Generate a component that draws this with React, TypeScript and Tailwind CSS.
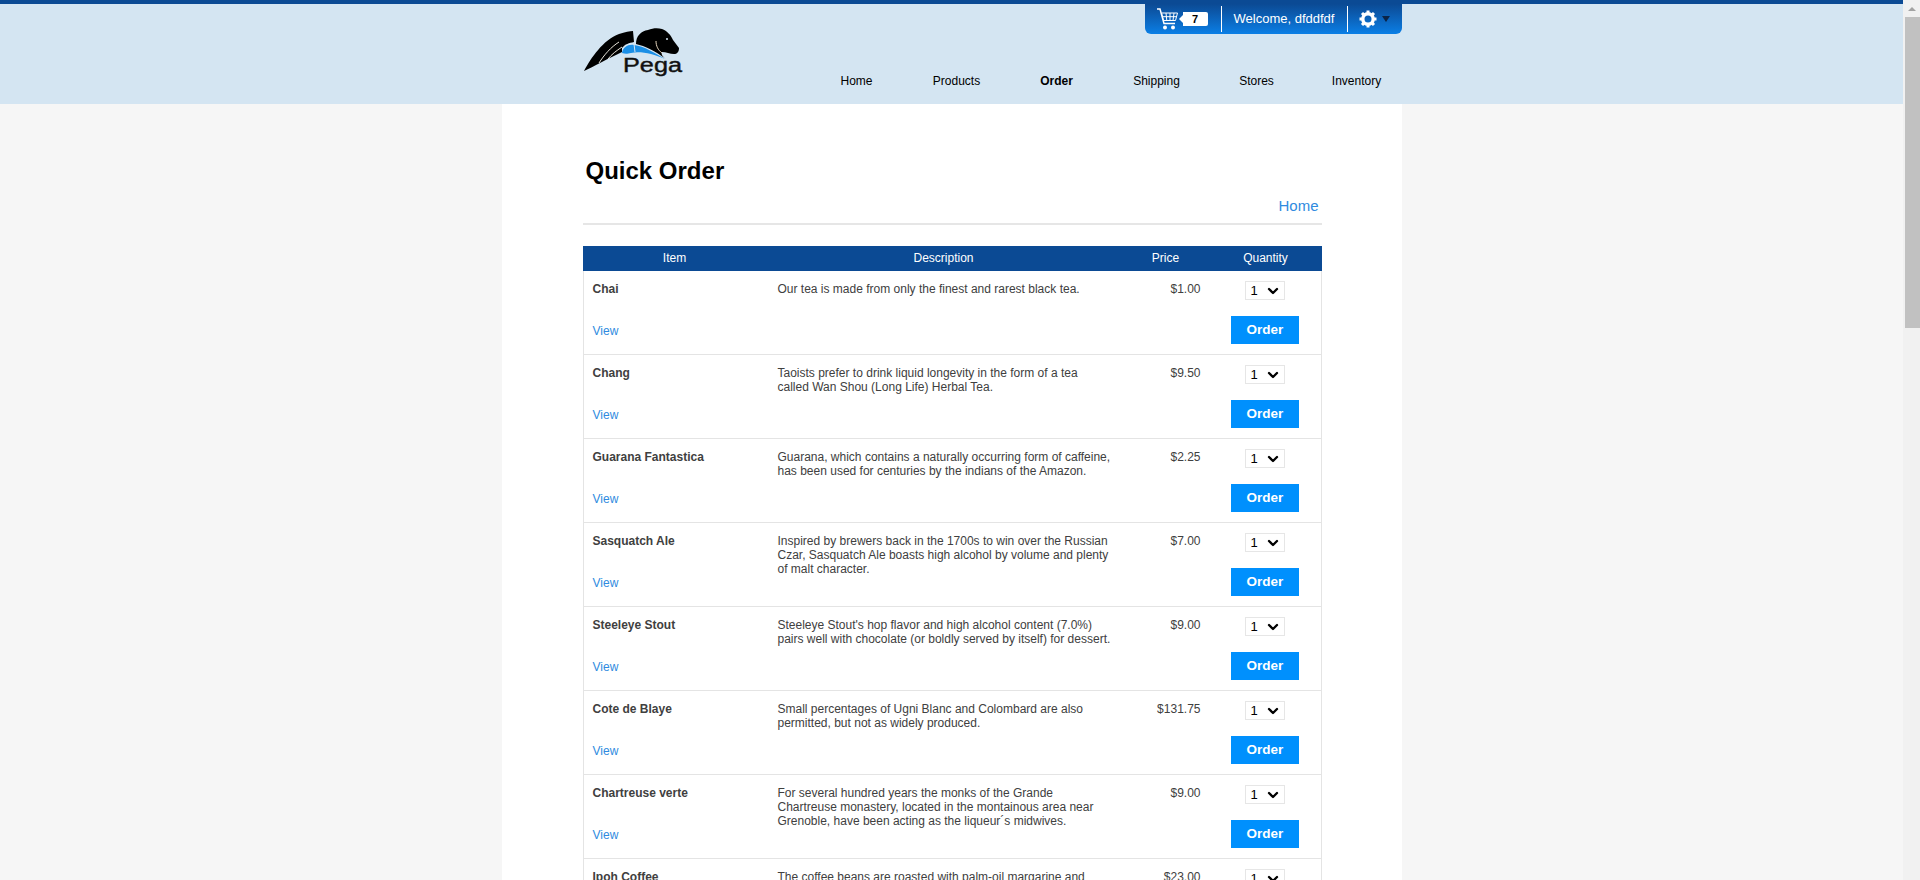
import { ChevronDown } from 'lucide-react';

type Product = {
  name: string;
  price: string;
  lines: string[];
};

const products: Product[] = [
  { name: 'Chai', price: '$1.00', lines: ['Our tea is made from only the finest and rarest black tea.'] },
  { name: 'Chang', price: '$9.50', lines: ['Taoists prefer to drink liquid longevity in the form of a tea', 'called Wan Shou (Long Life) Herbal Tea.'] },
  { name: 'Guarana Fantastica', price: '$2.25', lines: ['Guarana, which contains a naturally occurring form of caffeine,', 'has been used for centuries by the indians of the Amazon.'] },
  { name: 'Sasquatch Ale', price: '$7.00', lines: ['Inspired by brewers back in the 1700s to win over the Russian', 'Czar, Sasquatch Ale boasts high alcohol by volume and plenty', 'of malt character.'] },
  { name: 'Steeleye Stout', price: '$9.00', lines: ["Steeleye Stout's hop flavor and high alcohol content (7.0%)", 'pairs well with chocolate (or boldly served by itself) for dessert.'] },
  { name: 'Cote de Blaye', price: '$131.75', lines: ['Small percentages of Ugni Blanc and Colombard are also', 'permitted, but not as widely produced.'] },
  { name: 'Chartreuse verte', price: '$9.00', lines: ['For several hundred years the monks of the Grande', 'Chartreuse monastery, located in the montainous area near', 'Grenoble, have been acting as the liqueur´s midwives.'] },
  { name: 'Ipoh Coffee', price: '$23.00', lines: ['The coffee beans are roasted with palm-oil margarine and', 'sugar, which gives the coffee its distinctive flavor.'] },
];

const navItems = ['Home', 'Products', 'Order', 'Shipping', 'Stores', 'Inventory'];

function PegaLogo() {
  return (
    <svg width="104" height="52" viewBox="0 0 104 52" className="block">
      {/* wing */}
      <path d="M3 45 C10 32 22 14 38 8 C44 6 49 5 52 5 L53 16 C48 17 44 18 41 22 L41 26 C28 32 12 41 3 45 Z" fill="#000" />
      <path d="M18 37 C23 29 30 21 38 16 M27 33 C31 28 35 25 41 21" stroke="#e8e4da" strokeWidth="1" fill="none" />
      {/* horse head */}
      <path d="M55 18 C55 10 60 5 67 4 C72 2 77 2 81 3 C86 5 90 9 92 14 L98 22 C98 26 96 28 93 28 C89 28 85 26 81 26 C80 28 81 30 85 33 C74 25 64 20 55 18 Z" fill="#000" />
      <circle cx="86" cy="13" r="1" fill="#d4e5f2" />
      <path d="M75 15 C75 20 77 24 81 27" stroke="#e6d5bd" strokeWidth="1" fill="none" />
      {/* blue band */}
      <path d="M41 27 C42 21 47 18 53 19 C63 20 74 27 84 33 C72 28 60 25 50 27 C46 28 44 28 41 27 Z" fill="#1b8fe6" />
      <path d="M53 18 L54 26" stroke="#d4e5f2" strokeWidth="1" />
      <text x="42" y="46" fontFamily='"Liberation Sans", sans-serif' fontSize="20" textLength="59" lengthAdjust="spacingAndGlyphs" fill="#111" stroke="#111" strokeWidth="0.4">Pega</text>
    </svg>
  );
}

function CartIcon() {
  return (
    <svg width="21" height="22" viewBox="0 0 21 22" fill="none" stroke="#fff" strokeWidth="1.5">
      <path d="M0 1 H3 L7 15.5 H18" />
      <path d="M4.5 5 H20.5 L18.5 12.5 H6.5 Z M9 5 L9.8 12.5 M13 5 V12.5 M17 5 L16 12.5 M5.5 8.7 H19.5" strokeWidth="1" />
      <circle cx="8" cy="19.5" r="2" fill="#fff" stroke="none" />
      <circle cx="16" cy="19.5" r="2" fill="#fff" stroke="none" />
    </svg>
  );
}

function GearIcon() {
  return (
    <svg width="18" height="18" viewBox="0 0 18 18">
      <circle cx="9" cy="9" r="5.2" fill="none" stroke="#fff" strokeWidth="3.4" />
      <path d="M9 0.5 V17.5 M0.5 9 H17.5 M3 3 L15 15 M15 3 L3 15" stroke="#fff" strokeWidth="3" strokeDasharray="2.6 11.8" />
    </svg>
  );
}

function ProductRow({ product }: { product: Product }) {
  return (
    <div className="flex h-[84px] border-b border-[#e4e4e4] text-[12px] leading-[14px] text-[#404040]">
      <div className="flex w-[194px] flex-col justify-between pt-[11px] pb-[16px] pl-[9px]">
        <span className="font-bold">{product.name}</span>
        <a className="text-[#2f8be0]">View</a>
      </div>
      <div className="w-[340px] pt-[11px] whitespace-nowrap">
        {product.lines.map((line) => (
          <div key={line}>{line}</div>
        ))}
      </div>
      <div className="w-[83px] pt-[11px] text-right">{product.price}</div>
      <div className="flex flex-1 flex-col gap-[16px] pt-[10px] pl-[44px]">
        <div className="flex h-[19px] w-[40px] items-center justify-between border border-[#e6e6e6] pr-[3px] pl-[5px] text-[13px] text-black">
          <span>1</span>
          <ChevronDown size={16} strokeWidth={3.5} />
        </div>
        <button className="-ml-[14px] h-[28px] w-[68px] bg-[#0090fd] pl-[1px] text-[13.5px] font-bold text-white">Order</button>
      </div>
    </div>
  );
}

export default function App() {
  return (
    <div className="flex h-[880px] overflow-hidden bg-[#f6f6f6] font-['Liberation_Sans',Arial,sans-serif]">
      <div className="flex min-w-0 flex-1 flex-col">
        <header className="h-[104px] shrink-0 border-t-[4px] border-[#0b4a94] bg-[#d4e5f2]">
          <div className="relative mx-auto h-full w-[900px]">
            <div className="ml-auto flex h-[30px] w-[257px] items-center rounded-b-[6px] bg-gradient-to-b from-[#0b4a94] to-[#0a7fe6] text-[13px] text-white">
              <div className="flex w-[76px] items-center pl-[12px]">
                <CartIcon />
                <span className="ml-[1px] h-0 w-0 border-y-[4px] border-r-[4px] border-y-transparent border-r-white" />
                <span className="flex h-[14px] w-[25px] items-center justify-center rounded-r-[2px] bg-white text-[11px] font-bold text-black">7</span>
              </div>
              <div className="h-[26px] w-px bg-white" />
              <div className="w-[125px] pl-[12px] whitespace-nowrap">Welcome, dfddfdf</div>
              <div className="h-[26px] w-px bg-white" />
              <div className="flex items-center gap-[5px] pl-[11px]">
                <GearIcon />
                <span className="h-0 w-0 border-x-[4px] border-t-[6px] border-x-transparent border-t-[#0b2447]" />
              </div>
            </div>
            <div className="absolute top-[22px] left-[79px]">
              <PegaLogo />
            </div>
            <nav className="mt-[40px] ml-[305px] flex w-[600px] text-center text-[12px] leading-[14px] text-black">
              {navItems.map((item) => (
                <a key={item} className={item === 'Order' ? 'w-[100px] font-bold' : 'w-[100px]'}>{item}</a>
              ))}
            </nav>
          </div>
        </header>
        <main className="mx-auto min-h-0 w-[900px] flex-1 overflow-hidden bg-white pr-[80px] pl-[81px]">
          <h1 className="mt-[53px] ml-[3px] text-[24px] leading-[28px] font-bold text-black">Quick Order</h1>
          <div className="mt-[12px] h-[28px] border-b-2 border-[#e6e6e6] pr-[3px] text-right text-[15px] leading-[18px] text-[#2f8be0]">Home</div>
          <div className="mt-[21px] border-x border-[#e4e4e4]">
            <div className="-mx-px flex h-[25px] items-center bg-[#0b4a94] pb-[1px] text-[12px] text-white">
              <div className="w-[184px] text-center">Item</div>
              <div className="w-[354px] text-center">Description</div>
              <div className="w-[90px] text-center">Price</div>
              <div className="w-[110px] text-center">Quantity</div>
            </div>
            {products.map((product) => (
              <ProductRow key={product.name} product={product} />
            ))}
          </div>
        </main>
      </div>
      <div className="flex w-[17px] shrink-0 flex-col bg-[#f1f1f1]">
        <div className="flex h-[17px] items-center justify-center">
          <span className="h-0 w-0 border-x-[4px] border-b-[4px] border-x-transparent border-b-[#a3a3a3]" />
        </div>
        <div className="ml-[2px] h-[311px] bg-[#c1c1c1]" />
      </div>
    </div>
  );
}
